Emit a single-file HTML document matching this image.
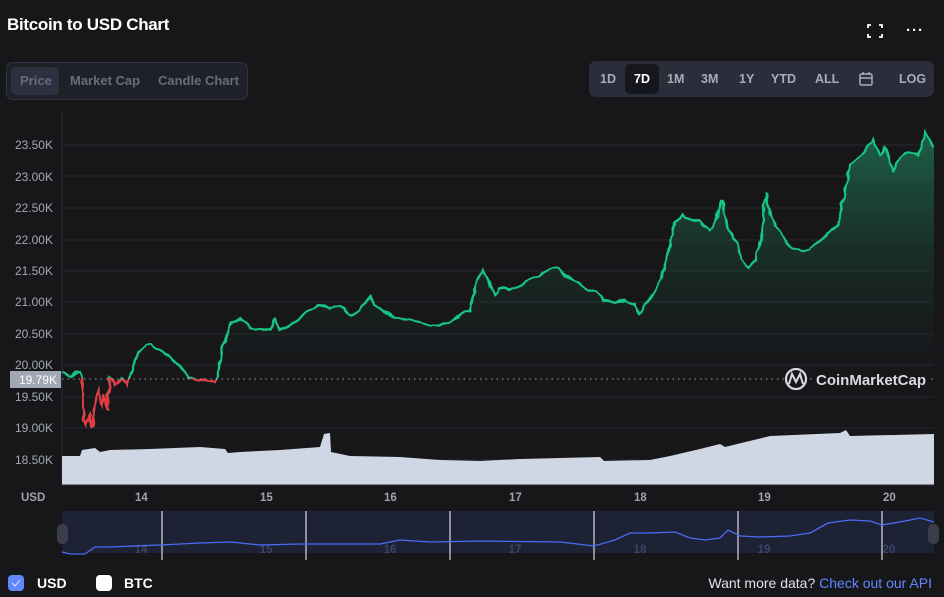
<!DOCTYPE html>
<html><head><meta charset="utf-8"><style>
*{margin:0;padding:0;box-sizing:border-box}
body{width:944px;height:597px;background:#17171a;font-family:"Liberation Sans",sans-serif;position:relative;overflow:hidden;color:#fff}
.t{position:absolute;left:7px;top:15px;font-size:17px;font-weight:bold;letter-spacing:-0.3px}
.seg{position:absolute;left:6px;top:62px;width:242px;height:38px;border:1px solid #30333f;border-radius:7px;background:#1f2129}
.seg span{position:absolute;top:4px;height:28px;line-height:28px;font-size:13px;color:#676c7e;font-weight:bold}
.rng{position:absolute;left:589px;top:61px;width:345px;height:36px;border-radius:7px;background:#2a2d3a}
.rng span{position:absolute;top:0;height:36px;line-height:36px;font-size:12.5px;font-weight:bold;color:#a8adbd}
.yl{position:absolute;left:0;width:53px;text-align:right;font-size:12px;color:#a3a8b6}
.xl{position:absolute;top:492px;font-size:11.5px;color:#9ea3b2;font-weight:bold}
</style></head><body>
<div class="t">Bitcoin to USD Chart</div>
<svg style="position:absolute;left:866px;top:23px" width="18" height="16" viewBox="0 0 18 16" fill="none" stroke="#fff" stroke-width="1.8"><path d="M2 5V2h3M13 2h3v3M16 11v3h-3M5 14H2v-3"/></svg>
<div style="position:absolute;left:906px;top:22px;font-size:15px;font-weight:bold;letter-spacing:1px">···</div>
<div class="seg"><div style="position:absolute;left:4px;top:4px;width:48px;height:28px;background:#2d303e;border-radius:5px"></div>
<span style="left:13px">Price</span><span style="left:63px">Market Cap</span><span style="left:151px">Candle Chart</span></div>
<div class="rng"><div style="position:absolute;left:36px;top:3px;width:34px;height:30px;background:#16171d;border-radius:5px"></div>
<span style="left:11px">1D</span><span style="left:45px;color:#fff">7D</span><span style="left:78px">1M</span><span style="left:112px">3M</span><span style="left:150px">1Y</span><span style="left:182px">YTD</span><span style="left:226px">ALL</span>
<svg style="position:absolute;left:269px;top:10px" width="16" height="16" viewBox="0 0 16 16" fill="none" stroke="#a8adbd" stroke-width="1.5"><rect x="2" y="3" width="12" height="11" rx="1.5"/><path d="M2 7h12M5 1v3M11 1v3"/></svg>
<span style="left:310px">LOG</span></div>

<svg style="position:absolute;left:0;top:0" width="944" height="597">
<defs><linearGradient id="g" x1="0" y1="0" x2="0" y2="1"><stop offset="0" stop-color="#1e7050" stop-opacity=".85"/><stop offset="1" stop-color="#17171a" stop-opacity=".1"/></linearGradient>
<clipPath id="r"><rect x="0" y="379" width="944" height="100"/></clipPath>
<filter id="n" x="-5%" y="-20%" width="110%" height="140%"><feTurbulence type="fractalNoise" baseFrequency="0.12" numOctaves="1" seed="3"/><feDisplacementMap in="SourceGraphic" scale="6" xChannelSelector="R" yChannelSelector="G"/></filter></defs>
<line x1="62" y1="112" x2="62" y2="486" stroke="#2a2c36"/>
<g stroke="#262833">
<line x1="62" y1="145" x2="934" y2="145"/><line x1="62" y1="176" x2="934" y2="176"/><line x1="62" y1="208" x2="934" y2="208"/><line x1="62" y1="240" x2="934" y2="240"/><line x1="62" y1="271" x2="934" y2="271"/><line x1="62" y1="302" x2="934" y2="302"/><line x1="62" y1="334" x2="934" y2="334"/><line x1="62" y1="365" x2="934" y2="365"/><line x1="62" y1="397" x2="934" y2="397"/><line x1="62" y1="428" x2="934" y2="428"/><line x1="62" y1="460" x2="934" y2="460"/></g>
<path id="p" d="M62 372L70 376L80 372L82 378L84 420L86 424L90 415L92 428L95 400L98 390L102 405L105 395L107 410L110 378L115 385L122 378L128 385L135 360L140 352L145 345L150 345L155 348L160 350L168 355L175 362L182 368L188 378L195 380L205 380L215 382L218 375L222 345L226 340L232 322L240 318L248 325L255 330L262 328L270 330L275 320L280 330L290 325L300 318L310 310L320 305L330 308L340 305L350 315L360 310L370 296L375 305L385 312L395 318L405 320L420 322L430 326L440 325L450 322L460 315L470 310L476 285L482 270L488 278L495 295L500 288L510 290L520 285L530 280L540 275L550 270L558 268L565 275L575 280L585 288L595 292L605 300L615 302L625 300L635 305L640 313L648 302L652 295L658 285L664 270L668 250L675 222L682 215L690 220L700 222L710 230L716 218L722 200L726 222L735 240L742 260L748 268L755 262L760 240L766 193L770 215L778 230L785 240L792 248L800 250L810 250L820 240L830 230L838 225L845 190L850 165L858 158L865 150L873 140L880 155L885 148L893 170L900 158L910 152L918 155L925 132L930 140L934 148" fill="none"/>
<path d="M62 372L70 376L80 372L82 378L110 378L115 385L122 378L128 385L135 360L140 352L145 345L150 345L155 348L160 350L168 355L175 362L182 368L188 378L218 375L222 345L226 340L232 322L240 318L248 325L255 330L262 328L270 330L275 320L280 330L290 325L300 318L310 310L320 305L330 308L340 305L350 315L360 310L370 296L375 305L385 312L395 318L405 320L420 322L430 326L440 325L450 322L460 315L470 310L476 285L482 270L488 278L495 295L500 288L510 290L520 285L530 280L540 275L550 270L558 268L565 275L575 280L585 288L595 292L605 300L615 302L625 300L635 305L640 313L648 302L652 295L658 285L664 270L668 250L675 222L682 215L690 220L700 222L710 230L716 218L722 200L726 222L735 240L742 260L748 268L755 262L760 240L766 193L770 215L778 230L785 240L792 248L800 250L810 250L820 240L830 230L838 225L845 190L850 165L858 158L865 150L873 140L880 155L885 148L893 170L900 158L910 152L918 155L925 132L930 140L934 148L934 379L62 379Z" fill="url(#g)"/>
<g filter="url(#n)"><use href="#p" stroke="#16c784" stroke-width="2.3"/>
<use href="#p" stroke="#ea3943" stroke-width="2.3" clip-path="url(#r)"/></g>
<line x1="62" y1="379" x2="934" y2="379" stroke="#9ea3b2" stroke-dasharray="1.5 4"/>
<path d="M62 456L80 456L82 450L95 448L100 452L110 450L150 449L200 447L225 449L228 453L240 452L280 450L320 447L324 434L330 433L331 452L350 456L400 457L440 460L480 461L520 459L600 457L604 461L650 460L670 456L700 449L720 444L725 447L770 436L840 433L846 430L850 436L934 434L934 485L62 485Z" fill="#cfd6e4"/>
<line x1="62" y1="485" x2="934" y2="485" stroke="#2a2c36"/>
<rect x="10" y="371" width="51" height="17" fill="#a1a7b5"/>
<text x="57" y="384" text-anchor="end" font-size="12" fill="#fff" font-family="Liberation Sans">19.79K</text>
<circle cx="796" cy="379" r="10" fill="#17171a" stroke="#d8dbe3" stroke-width="2.2"/>
<path d="M789 384L792 374L796 382L800 374L803 384" fill="none" stroke="#d8dbe3" stroke-width="2"/>
<rect x="812" y="370" width="118" height="18" fill="#17171a"/>
<text x="816" y="385" font-size="15" fill="#d8dbe3" font-family="Liberation Sans" font-weight="bold">CoinMarketCap</text>
<rect x="62" y="511" width="872" height="42" fill="#1e2235"/>
<g stroke="#fff"><line x1="162" y1="511" x2="162" y2="560"/><line x1="306" y1="511" x2="306" y2="560"/><line x1="450" y1="511" x2="450" y2="560"/><line x1="594" y1="511" x2="594" y2="560"/><line x1="738" y1="511" x2="738" y2="560"/><line x1="882" y1="511" x2="882" y2="560"/></g>
<g font-size="11.5" fill="#3b4466" font-family="Liberation Sans" font-weight="bold" text-anchor="middle"><text x="141" y="553">14</text><text x="266" y="553">15</text><text x="390" y="553">16</text><text x="515" y="553">17</text><text x="640" y="553">18</text><text x="764" y="553">19</text><text x="889" y="553">20</text></g>
<path d="M62 552L70 554L85 554L95 547L110 547L160 545L200 543L230 542L260 545L300 544L380 544L400 540L430 542L480 541L560 542L594 546L615 540L630 533L650 533L675 532L690 538L705 540L720 538L728 530L740 536L760 537L790 536L810 533L828 523L850 520L870 521L882 525L905 521L920 518L934 522" fill="none" stroke="#4a6cf7" stroke-width="1.3"/>
<rect x="57" y="524" width="11" height="20" rx="5" fill="#3a3d4a"/><rect x="928" y="524" width="11" height="20" rx="5" fill="#3a3d4a"/>
<rect x="8" y="575" width="16" height="16" rx="4" fill="#6188ff"/>
<path d="M12 583l3 3 5-6" fill="none" stroke="#c8d4ff" stroke-width="1.3"/>
</svg>
<div class="yl" style="top:138px">23.50K</div><div class="yl" style="top:170px">23.00K</div><div class="yl" style="top:201px">22.50K</div><div class="yl" style="top:233px">22.00K</div><div class="yl" style="top:264px">21.50K</div><div class="yl" style="top:295px">21.00K</div><div class="yl" style="top:327px">20.50K</div><div class="yl" style="top:358px">20.00K</div><div class="yl" style="top:390px">19.50K</div><div class="yl" style="top:421px">19.00K</div><div class="yl" style="top:453px">18.50K</div>
<div class="xl" style="left:21px">USD</div>
<div class="xl" style="left:135px">14</div><div class="xl" style="left:260px">15</div><div class="xl" style="left:384px">16</div><div class="xl" style="left:509px">17</div><div class="xl" style="left:634px">18</div><div class="xl" style="left:758px">19</div><div class="xl" style="left:883px">20</div>
<div style="position:absolute;left:37px;top:575px;font-size:14px;font-weight:bold">USD</div>
<div style="position:absolute;left:96px;top:575px;width:16px;height:16px;border-radius:4px;background:#fff"></div>
<div style="position:absolute;left:124px;top:575px;font-size:14px;font-weight:bold">BTC</div>
<div style="position:absolute;right:12px;top:575px;font-size:14px;color:#e0e2e8">Want more data? <span style="color:#6188ff">Check out our API</span></div>
</body></html>
